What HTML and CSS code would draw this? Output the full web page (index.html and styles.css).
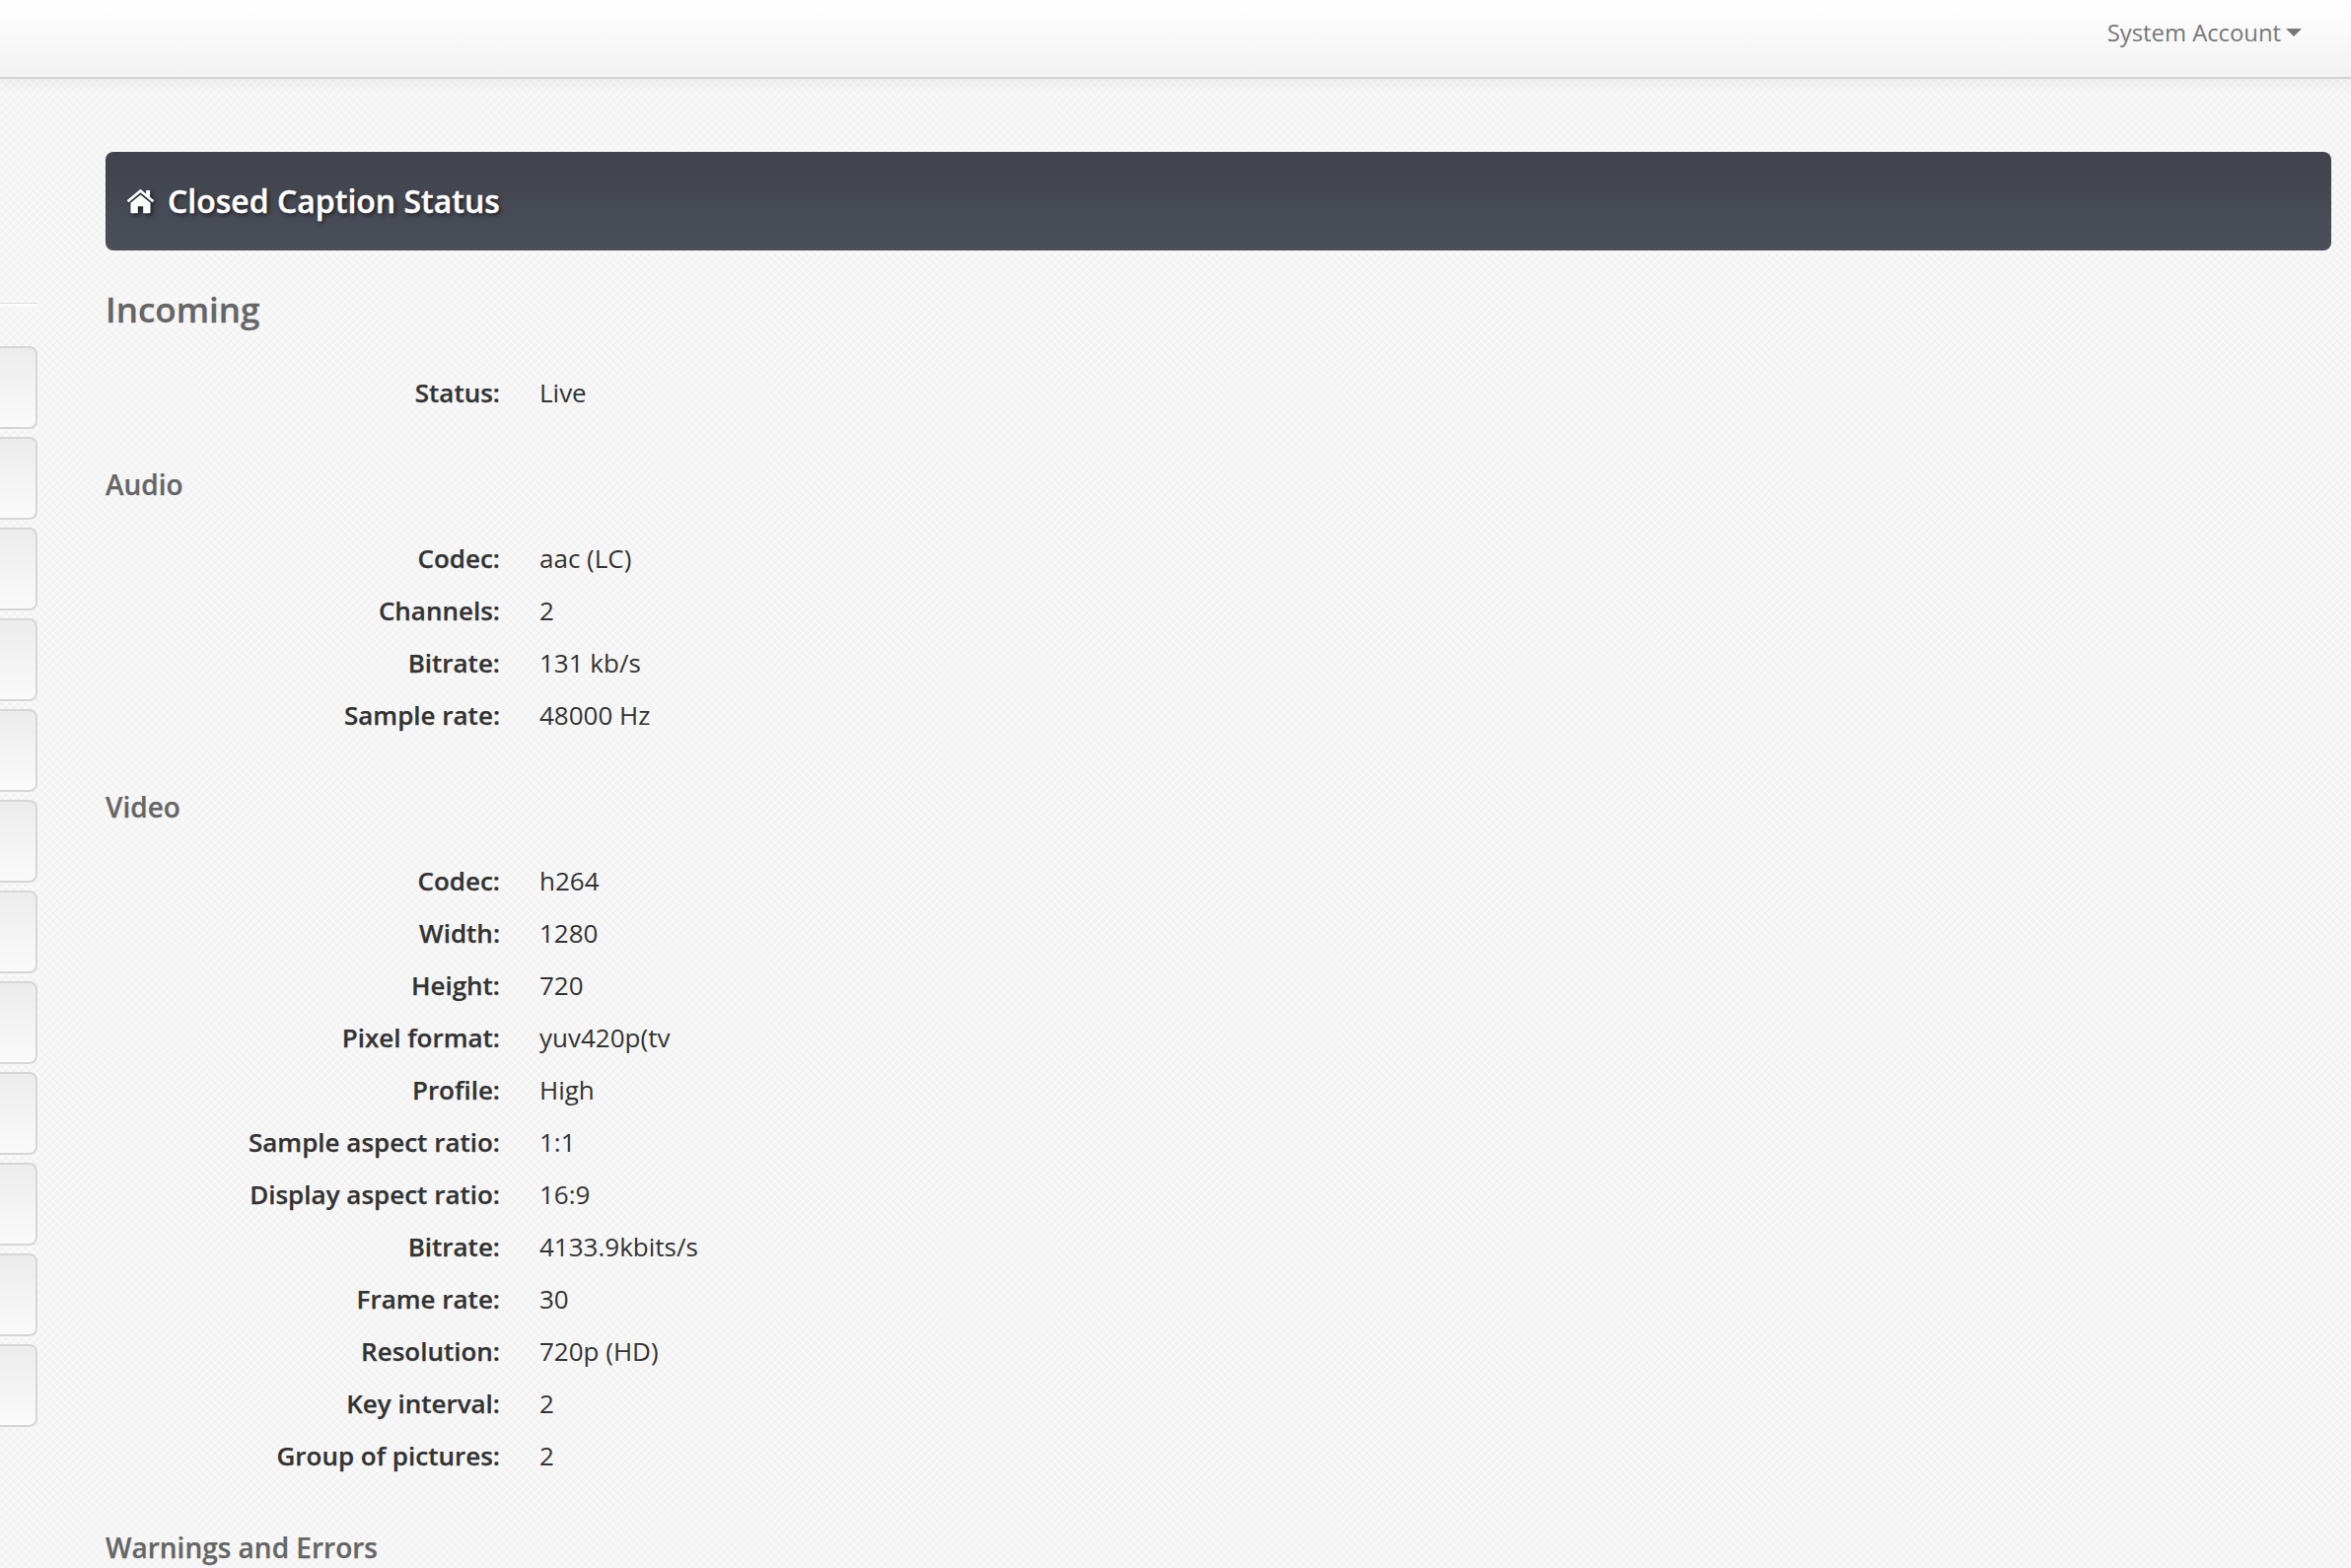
FILE: index.html
```html
<!DOCTYPE html>
<html lang="en">
<head>
<meta charset="utf-8">
<title>Closed Caption Status</title>
<link rel="stylesheet" href="styles.css">
</head>
<body>
<header class="navbar">
  <a class="account">System Account<span class="caret"></span></a>
</header>
<div class="layout">
  <aside class="sidebar">
    <div class="side-rule"></div>
    <div class="side-btn"></div><div class="side-btn"></div><div class="side-btn"></div><div class="side-btn"></div>
    <div class="side-btn"></div><div class="side-btn"></div><div class="side-btn"></div><div class="side-btn"></div>
    <div class="side-btn"></div><div class="side-btn"></div><div class="side-btn"></div><div class="side-btn"></div>
  </aside>
  <main class="main">
    <div class="banner">
      <svg class="home" viewBox="0 0 26 22" width="29" height="26" aria-hidden="true"><path d="M13 3.2 2.2 12.2l-1.6-1.9L13 0l5 4.2V1.2h3.6v6l3.8 3.1-1.6 1.9Z" fill="#fff"/><path d="M13 5.2 22 12.6V21a1 1 0 0 1-1 1h-5.6v-6.2h-4.8V22H5a1 1 0 0 1-1-1v-8.4Z" fill="#fff"/></svg>
      <h1 class="banner-title">Closed Caption Status</h1>
    </div>
    <h2 class="h-incoming">Incoming</h2>
    <dl class="fields">
      <dt>Status:</dt><dd>Live</dd>
    </dl>
    <h3 class="h-section">Audio</h3>
    <dl class="fields">
      <dt>Codec:</dt><dd>aac (LC)</dd>
      <dt>Channels:</dt><dd>2</dd>
      <dt>Bitrate:</dt><dd>131 kb/s</dd>
      <dt>Sample rate:</dt><dd>48000 Hz</dd>
    </dl>
    <h3 class="h-section">Video</h3>
    <dl class="fields">
      <dt>Codec:</dt><dd>h264</dd>
      <dt>Width:</dt><dd>1280</dd>
      <dt>Height:</dt><dd>720</dd>
      <dt>Pixel format:</dt><dd>yuv420p(tv</dd>
      <dt>Profile:</dt><dd>High</dd>
      <dt>Sample aspect ratio:</dt><dd>1:1</dd>
      <dt>Display aspect ratio:</dt><dd>16:9</dd>
      <dt>Bitrate:</dt><dd>4133.9kbits/s</dd>
      <dt>Frame rate:</dt><dd>30</dd>
      <dt>Resolution:</dt><dd>720p (HD)</dd>
      <dt>Key interval:</dt><dd>2</dd>
      <dt>Group of pictures:</dt><dd>2</dd>
    </dl>
    <h3 class="h-section">Warnings and Errors</h3>
  </main>
</div>
</body>
</html>
```
FILE: styles.css
```css
* { box-sizing: border-box; }
html, body { margin: 0; height: 100%; overflow: hidden; }
body {
  width: 2384px;
  height: 1590px;
  font-family: "Open Sans", sans-serif;
  color: #333;
  background-color: #f6f6f6;
  background-image:
    radial-gradient(circle at 2px 2px, #f1f1f1 1.2px, transparent 2px),
    radial-gradient(circle at 6px 6px, #f1f1f1 1.2px, transparent 2px),
    radial-gradient(circle at 6px 2px, #f9f9f9 1.2px, transparent 2px),
    radial-gradient(circle at 2px 6px, #f9f9f9 1.2px, transparent 2px);
  background-size: 8px 8px;
}
.navbar {
  position: relative;
  height: 80px;
  display: flex;
  justify-content: flex-end;
  padding: 0 50px 0 0;
  background: linear-gradient(#ffffff, #f2f2f2);
  border-bottom: 2px solid #d2d2d2;
  box-shadow: 0 2px 16px rgba(0,0,0,.07);
}
.account {
  display: flex;
  align-items: center;
  height: 66px;
  font-size: 23.8px;
  color: #777;
}
.caret {
  width: 0;
  height: 0;
  margin-left: 5px;
  border-left: 8px solid transparent;
  border-right: 8px solid transparent;
  border-top: 8px solid #777;
}
.layout { display: flex; }
.sidebar {
  width: 38px;
  flex: none;
  overflow: hidden;
  padding-top: 227px;
}
.side-rule {
  height: 3px;
  margin-bottom: 41px;
  background: #fff;
  border-top: 1px solid #dcdcdc;
}
.side-btn {
  width: 58px;
  height: 84px;
  margin-left: -20px;
  margin-bottom: 8px;
  background: linear-gradient(#ececec, #fafafa);
  border: 2px solid #d6d6d6;
  border-radius: 8px;
}
.main {
  flex: 1;
  margin: 74px 20px 0 69px;
  min-width: 0;
}
.banner {
  height: 100px;
  display: flex;
  align-items: center;
  gap: 13px;
  padding: 0 21px;
  border-radius: 8px;
  background: linear-gradient(#40434b, #4b4f5a);
}
.home { flex: none; filter: drop-shadow(2px 2px 2px rgba(0,0,0,.6)); }
.banner-title {
  margin: 0 0 2px;
  font-size: 32px;
  font-weight: 600;
  color: #fff;
  -webkit-text-stroke: .4px #fff;
  text-shadow: 2px 2px 4px rgba(0,0,0,.6);
}
.h-incoming {
  margin: 35px 0 0;
  font-size: 35px;
  line-height: 50px;
  font-weight: 600;
  color: #666;
  -webkit-text-stroke: .3px #666;
}
.h-section {
  margin: 0;
  font-size: 28px;
  line-height: 40px;
  font-weight: 600;
  color: #666;
  -webkit-text-stroke: .25px #666;
  padding-top: 47px;
  padding-bottom: 28px;
}
.fields {
  display: grid;
  grid-template-columns: 400px 1fr;
  grid-auto-rows: 53px;
  column-gap: 40px;
  align-items: center;
  margin: 32px 0 0;
  font-size: 26px;
}
.h-section + .fields { margin-top: 0; }
.fields dt { text-align: right; font-weight: 600; color: #333; -webkit-text-stroke: .25px #333; }
.fields dd { margin: 0; color: #333; }
```
